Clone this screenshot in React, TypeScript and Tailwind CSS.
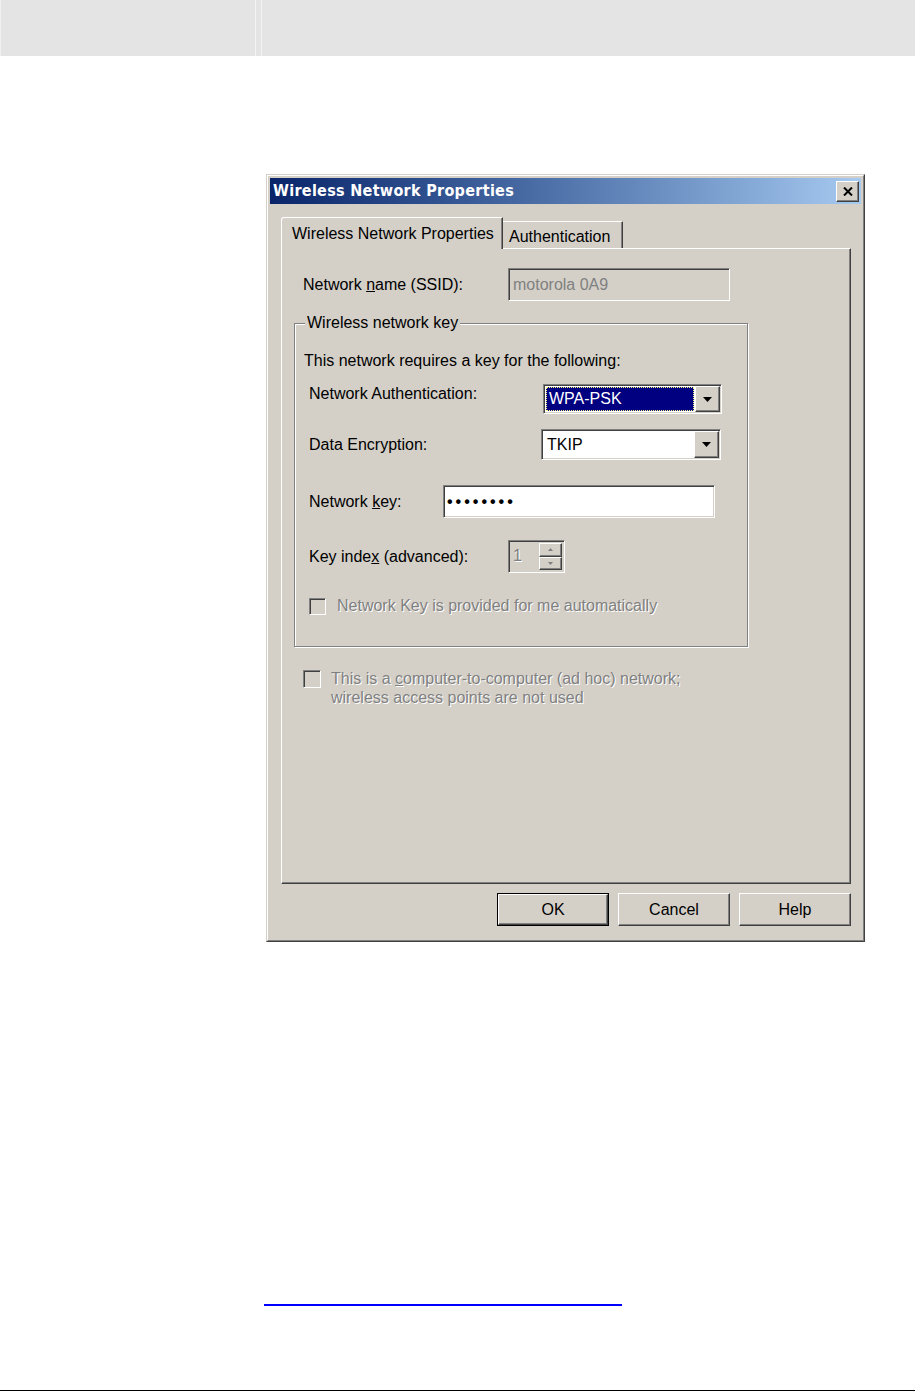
const sunken =
	"border border-t-[#808080] border-l-[#808080] border-r-white border-b-white shadow-[inset_1px_1px_0_#404040,inset_-1px_-1px_0_#d4d0c8]";
const raised =
	"border border-t-white border-l-white border-r-[#404040] border-b-[#404040] shadow-[inset_-1px_-1px_0_#808080]";
const disabledText = "text-[#808080] [text-shadow:1px_1px_0_#ffffff]";

function ArrowButton() {
	return (
		<div className={`w-[25px] h-full bg-[#d4d0c8] flex items-center justify-center ${raised}`}>
			<svg width="9" height="5" viewBox="0 0 9 5">
				<path d="M0 0h9L4.5 5z" fill="#000" />
			</svg>
		</div>
	);
}

function Dropdown({ value, selected, width, height }: { value: string; selected?: boolean; width: string; height: string }) {
	return (
		<div className={`${width} ${height} bg-white flex p-px ${sunken}`}>
			<div className="flex-1 p-px">
				{selected ? (
					<div className="h-full bg-[#000080] border border-dotted border-[#ffff80] text-white leading-none flex items-center pl-[2px]">
						{value}
					</div>
				) : (
					<div className="h-full flex items-center pl-[3px] text-black">{value}</div>
				)}
			</div>
			<ArrowButton />
		</div>
	);
}

function Checkbox({ size }: { size: string }) {
	return <div className={`${size} shrink-0 bg-[#d4d0c8] ${sunken}`} />;
}

function Button({ label, isDefault }: { label: string; isDefault?: boolean }) {
	return (
		<div className={`w-[112px] h-[33px] ${isDefault ? "border border-black" : ""}`}>
			<div className={`w-full h-full flex items-center justify-center bg-[#d4d0c8] ${raised}`}>
				{label}
			</div>
		</div>
	);
}

function Dialog() {
	return (
		<div className="ml-[266px] mt-[118px] w-[599px] h-[768px] border border-t-[#d4d0c8] border-l-[#d4d0c8] border-r-[#404040] border-b-[#404040] bg-[#d4d0c8]">
			<div className="w-full h-full border border-t-white border-l-white border-r-[#808080] border-b-[#808080] p-[2px] flex flex-col">
				{/* title bar */}
				<div className="h-[26px] bg-linear-to-r from-[#0a246a] to-[#a6caf0] flex items-center justify-between pl-[3px] pr-[2px]">
					<span className="text-white font-bold text-[16px] tracking-[0.3px] font-['DejaVu_Sans_Condensed','DejaVu_Sans',sans-serif]">
						Wireless Network Properties
					</span>
					<div className={`w-[23px] h-[21px] bg-[#d4d0c8] flex items-center justify-center ${raised}`}>
						<svg width="10" height="9" viewBox="0 0 10 9">
							<path d="M1 0.5l8 8M9 0.5l-8 8" stroke="#000" strokeWidth="2" />
						</svg>
					</div>
				</div>

				{/* tabs */}
				<div className="ml-[11px] mt-[13px] flex items-end h-[31px]">
					<div className="relative z-10 -mb-px w-[222px] h-[32px] bg-[#d4d0c8] border-t border-l border-white border-r border-r-[#404040] rounded-tl-[3px] shadow-[inset_-1px_0_0_#808080] pl-[10px] pt-[4px]">
						Wireless Network Properties
					</div>
					<div className="w-[120px] h-[27px] bg-[#d4d0c8] border-t border-white border-r border-r-[#404040] shadow-[inset_-1px_0_0_#808080] pl-[6px] pt-[3px]">
						Authentication
					</div>
				</div>

				{/* tab panel */}
				<div className={`ml-[11px] w-[570px] h-[636px] ${raised}`}>
					<div className="mt-[19px] flex items-center h-[33px] ml-[21px]">
						<div className="w-[205px]">
							Network <u>n</u>ame (SSID):
						</div>
						<div className={`w-[222px] h-[33px] bg-[#d4d0c8] flex items-center pl-[4px] text-[#808080] ${sunken}`}>
							motorola 0A9
						</div>
					</div>

					{/* group box */}
					<div className="relative mt-[22px] ml-[12px] w-[454px] h-[324px] border border-[#808080] shadow-[1px_1px_0_#ffffff,inset_1px_1px_0_#ffffff]">
						<div className="absolute -top-[12px] left-[10px] bg-[#d4d0c8] px-[2px] leading-[22px]">
							Wireless network key
						</div>
						<div className="mt-[28px] ml-[9px] leading-[18px]">
							This network requires a key for the following:
						</div>
						<div className="mt-[14px] ml-[14px] flex items-start">
							<div className="w-[234px] leading-[20px]">Network Authentication:</div>
							<Dropdown value="WPA-PSK" selected width="w-[179px]" height="h-[30px]" />
						</div>
						<div className="mt-[15px] ml-[14px] flex items-center">
							<div className="w-[232px]">Data Encryption:</div>
							<Dropdown value="TKIP" width="w-[180px]" height="h-[31px]" />
						</div>
						<div className="mt-[25px] ml-[14px] flex items-center">
							<div className="w-[134px]">
								Network <u>k</u>ey:
							</div>
							<div className={`w-[272px] h-[33px] bg-white flex items-center pl-[3px] text-[16px] tracking-[3px] font-bold ${sunken}`}>
								••••••••
							</div>
						</div>
						<div className="mt-[22px] ml-[14px] flex items-center">
							<div className="w-[199px]">
								Key inde<u>x</u> (advanced):
							</div>
							<div className={`w-[57px] h-[33px] bg-[#d4d0c8] flex p-[2px] ${sunken}`}>
								<div className={`flex-1 pl-[2px] leading-[26px] ${disabledText}`}>1</div>
								<div className="w-[23px] flex flex-col">
									<div className={`flex-1 flex items-center justify-center ${raised}`}>
										<svg width="5" height="3" viewBox="0 0 5 3">
											<path d="M0 3h5L2.5 0z" fill="#808080" />
										</svg>
									</div>
									<div className={`flex-1 flex items-center justify-center ${raised}`}>
										<svg width="5" height="3" viewBox="0 0 5 3">
											<path d="M0 0h5L2.5 3z" fill="#808080" />
										</svg>
									</div>
								</div>
							</div>
						</div>
						<div className="mt-[21px] ml-[14px] flex items-center gap-[11px]">
							<Checkbox size="w-[17px] h-[17px]" />
							<div className={disabledText}>Network Key is provided for me automatically</div>
						</div>
					</div>

					<div className="mt-[23px] ml-[21px] flex items-start gap-[10px]">
						<Checkbox size="w-[18px] h-[18px]" />
						<div className={`leading-[19px] -mt-[1px] ${disabledText}`}>
							This is a <u>c</u>omputer-to-computer (ad hoc) network;
							<br />
							wireless access points are not used
						</div>
					</div>
				</div>

				{/* buttons */}
				<div className="mt-[9px] ml-[11px] w-[570px] flex justify-end gap-[9px]">
					<Button label="OK" isDefault />
					<Button label="Cancel" />
					<Button label="Help" />
				</div>
			</div>
		</div>
	);
}

export default function App() {
	return (
		<div className="w-[915px] h-[1392px] bg-white flex flex-col text-[16px] text-black font-['Liberation_Sans',Arial,sans-serif]">
			<div className="h-[56px] flex shrink-0">
				<div className="w-px bg-[#f0f0f0]" />
				<div className="w-[254px] bg-[#e4e4e4]" />
				<div className="w-px bg-[#f4f4f4]" />
				<div className="w-[5px] bg-[#e4e4e4]" />
				<div className="w-px bg-[#f4f4f4]" />
				<div className="flex-1 bg-[#e4e4e4]" />
			</div>

			<Dialog />

			<div className="mt-[362px] ml-[264px] w-[358px] h-[2px] bg-[#0000ff]" />

			<div className="mt-auto mb-[1px] h-px bg-black" />
		</div>
	);
}
